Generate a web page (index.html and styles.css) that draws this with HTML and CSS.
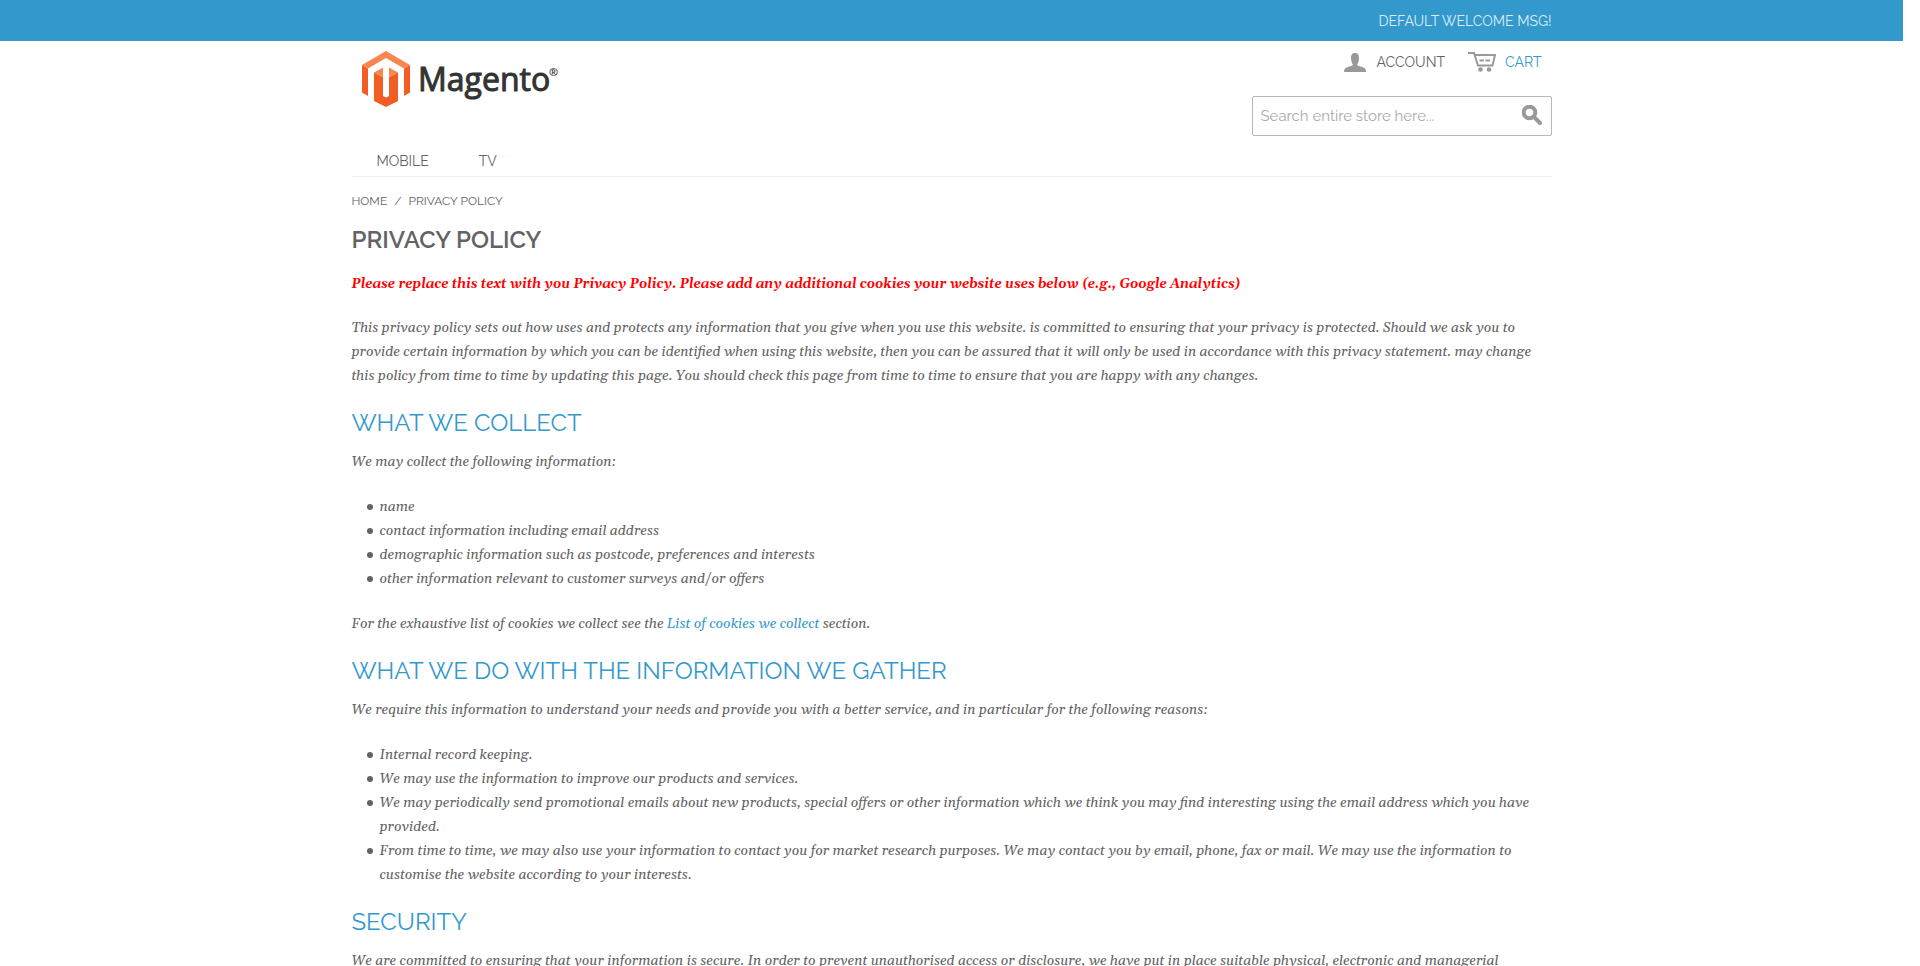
FILE: index.html
```html
<!DOCTYPE html>
<html lang="en">
<head>
<meta charset="utf-8">
<title>Privacy Policy</title>
<meta name="viewport" content="width=device-width, initial-scale=1">
<link rel="stylesheet" href="styles.css">
</head>
<body class="page">
<div class="topbar">
  <p class="container welcome">Default welcome msg!</p>
</div>

<header class="container header">
  <div class="header-main">
    <a class="logo" href="#" aria-label="Magento">
      <svg class="logo-mark" viewBox="0 0 48 56" aria-hidden="true">
        <path fill="#f15d22" d="M0 14 6 17.500V45L0 41.500zM48 14 42 17.500V45l6-3.500z"/>
        <path fill="#f7864f" d="M24 0 48 14l-6 3.500L24 7 6 17.500 0 14z"/>
        <path fill="#f15d22" d="M12 21.500 21 26V45l3 1.500 3-1.500V26l9-4.500V50L24 56 12 50z"/>
        <path fill="#f7864f" d="M12 21.500 21 16.500V26zM36 21.500 27 16.500V26z"/>
      </svg>
      <svg class="logo-word" viewBox="0 0 142 56" aria-hidden="true">
        <text class="logo-name" x="0" y="40">Magento</text>
        <text class="logo-reg" x="131" y="25">®</text>
      </svg>
    </a>
    <div class="header-tools">
      <nav class="account-links" aria-label="Account">
        <a class="tool-link" href="#">
          <svg class="icon-user" viewBox="0 0 22 19" aria-hidden="true"><path d="M7 5c0-3 1-5 4-5s4 2 4 5c0 3-1 5-2 7 1 1 3 1 5 2 3 1 4 2 4 5H0c0-3 1-4 4-5 2-1 4-1 5-2-1-2-2-4-2-7z"/></svg>
          <span>Account</span>
        </a>
        <a class="tool-link tool-link-cart" href="#">
          <svg class="icon-cart" viewBox="0 0 28 20" aria-hidden="true">
            <path class="cart-line" d="M0 1h6l4 12.500h14.500L27 3H7M11.500 8.500h4.500M17.500 8.500H22"/>
            <circle cx="12.500" cy="17.500" r="2.300"/><circle cx="21" cy="17.500" r="2.300"/>
          </svg>
          <span>Cart</span>
        </a>
      </nav>
      <form class="search" role="search">
        <input class="search-input" type="search" aria-label="Search" placeholder="Search entire store here...">
        <button class="search-button" type="submit" aria-label="Search">
          <svg class="icon-search" viewBox="0 0 20 20" aria-hidden="true"><circle cx="7.500" cy="7.500" r="5.800"/><path d="m11.500 11.500 6.500 6.500"/></svg>
        </button>
      </form>
    </div>
  </div>
  <nav class="main-nav" aria-label="Main">
    <a class="nav-link" href="#">Mobile</a>
    <a class="nav-link" href="#">TV</a>
  </nav>
</header>

<main class="container content">
  <nav class="breadcrumbs" aria-label="Breadcrumb"><a class="crumb" href="#">Home</a><span>/</span><span>Privacy Policy</span></nav>
  <h1 class="title">Privacy Policy</h1>
  <div class="text">
    <p class="notice"><strong>Please replace this text with you Privacy Policy. Please add any additional cookies your website uses below (e.g., Google Analytics)</strong></p>
    <p>This privacy policy sets out how uses and protects any information that you give when you use this website. is committed to ensuring that your privacy is protected. Should we ask you to provide certain information by which you can be identified when using this website, then you can be assured that it will only be used in accordance with this privacy statement. may change this policy from time to time by updating this page. You should check this page from time to time to ensure that you are happy with any changes.</p>
    <h2>What we collect</h2>
    <p>We may collect the following information:</p>
    <ul>
      <li>name</li>
      <li>contact information including email address</li>
      <li>demographic information such as postcode, preferences and interests</li>
      <li>other information relevant to customer surveys and/or offers</li>
    </ul>
    <p>For the exhaustive list of cookies we collect see the <a class="text-link" href="#">List of cookies we collect</a> section.</p>
    <h2>What we do with the information we gather</h2>
    <p>We require this information to understand your needs and provide you with a better service, and in particular for the following reasons:</p>
    <ul>
      <li>Internal record keeping.</li>
      <li>We may use the information to improve our products and services.</li>
      <li>We may periodically send promotional emails about new products, special offers or other information which we think you may find interesting using the email address which you have provided.</li>
      <li>From time to time, we may also use your information to contact you for market research purposes. We may contact you by email, phone, fax or mail. We may use the information to customise the website according to your interests.</li>
    </ul>
    <h2>Security</h2>
    <p>We are committed to ensuring that your information is secure. In order to prevent unauthorised access or disclosure, we have put in place suitable physical, electronic and managerial</p>
  </div>
</main>
</body>
</html>
```

FILE: styles.css
```css
* { box-sizing: border-box; }

.page {
  margin: 0;
  padding-right: 17px;
  height: 100vh;
  overflow: hidden;
  background: #fff;
  color: #636363;
  font-family: Raleway, Lato, "Open Sans", sans-serif;
  font-size: 14px;
}
.page a { color: inherit; text-decoration: none; }
.page svg { display: block; }

.container { width: 100%; max-width: 1200px; margin: 0 auto; }

.topbar { background: #3399cc; }
.welcome {
  padding: 11px 0 10px;
  color: #ddedf6;
  line-height: 20px;
  text-align: right;
  text-transform: uppercase;
}

.header { border-bottom: 1px solid #ededed; }
.header-main { display: flex; justify-content: space-between; align-items: flex-start; }
.logo { display: flex; padding: 10px; gap: 8px; }
.logo-mark { width: 48px; height: 56px; }
.logo-word { width: 142px; height: 56px; }
.logo-name { font-family: "Open Sans", sans-serif; font-size: 32px; font-weight: 500; fill: #333; stroke: #333; stroke-width: 1; }
.logo-reg { font-family: "Open Sans", sans-serif; font-size: 11px; font-weight: 700; fill: #333; }

.header-tools { width: 300px; }
.account-links {
  display: flex;
  justify-content: flex-end;
  gap: 23px;
  padding: 11px 10px 24px 0;
  line-height: 20px;
  text-transform: uppercase;
}
.tool-link { display: flex; align-items: center; gap: 10px; }
.page .tool-link-cart { color: #3399cc; gap: 9px; }
.icon-user { width: 22px; height: 19px; fill: #999; }
.icon-cart { width: 28px; height: 20px; fill: #999; }
.cart-line { fill: none; stroke: #999; stroke-width: 2; }

.search { display: flex; height: 40px; border: 1px solid #b8b8b8; border-radius: 2px; }
.search-input {
  flex: 1;
  min-width: 0;
  padding: 0 8px;
  border: 0;
  background: none;
  color: #636363;
  font: 15px Raleway, Lato, "Open Sans", sans-serif;
}
.search-input::placeholder { color: #aaa; opacity: 1; }
.search-button { width: 40px; padding: 0 9px 2px 11px; border: 0; background: none; }
.icon-search { width: 20px; height: 20px; fill: none; stroke: #999; stroke-width: 4; stroke-linecap: round; }

.main-nav { display: flex; gap: 50px; padding: 15px 25px 5px; line-height: 20px; text-transform: uppercase; }

.breadcrumbs {
  display: flex;
  gap: 7px;
  padding: 14px 0 12px;
  font-size: 12px;
  line-height: 20px;
  text-transform: uppercase;
}
.title {
  margin: 0 0 15px;
  font-size: 24px;
  font-weight: 600;
  line-height: 34px;
  text-transform: uppercase;
}

.text { font-family: Gelasio, Georgia, "Liberation Serif", serif; font-style: italic; line-height: 24px; }
.text p { margin: 0 0 21px; }
.text .notice { margin-bottom: 20px; color: #f00; font-size: 13px; }
.text h2 {
  margin: 0 0 13px;
  color: #3399cc;
  font: 24px/28px Raleway, Lato, "Open Sans", sans-serif;
  text-transform: uppercase;
}
.text ul { margin: 0 0 21px; padding-left: 28px; list-style: none; }
.text li::before {
  content: "";
  display: inline-block;
  width: 6px;
  height: 6px;
  margin: 0 7px 2px -13px;
  border-radius: 50%;
  background: #636363;
  vertical-align: middle;
}
.page .text-link { color: #3399cc; }
```
